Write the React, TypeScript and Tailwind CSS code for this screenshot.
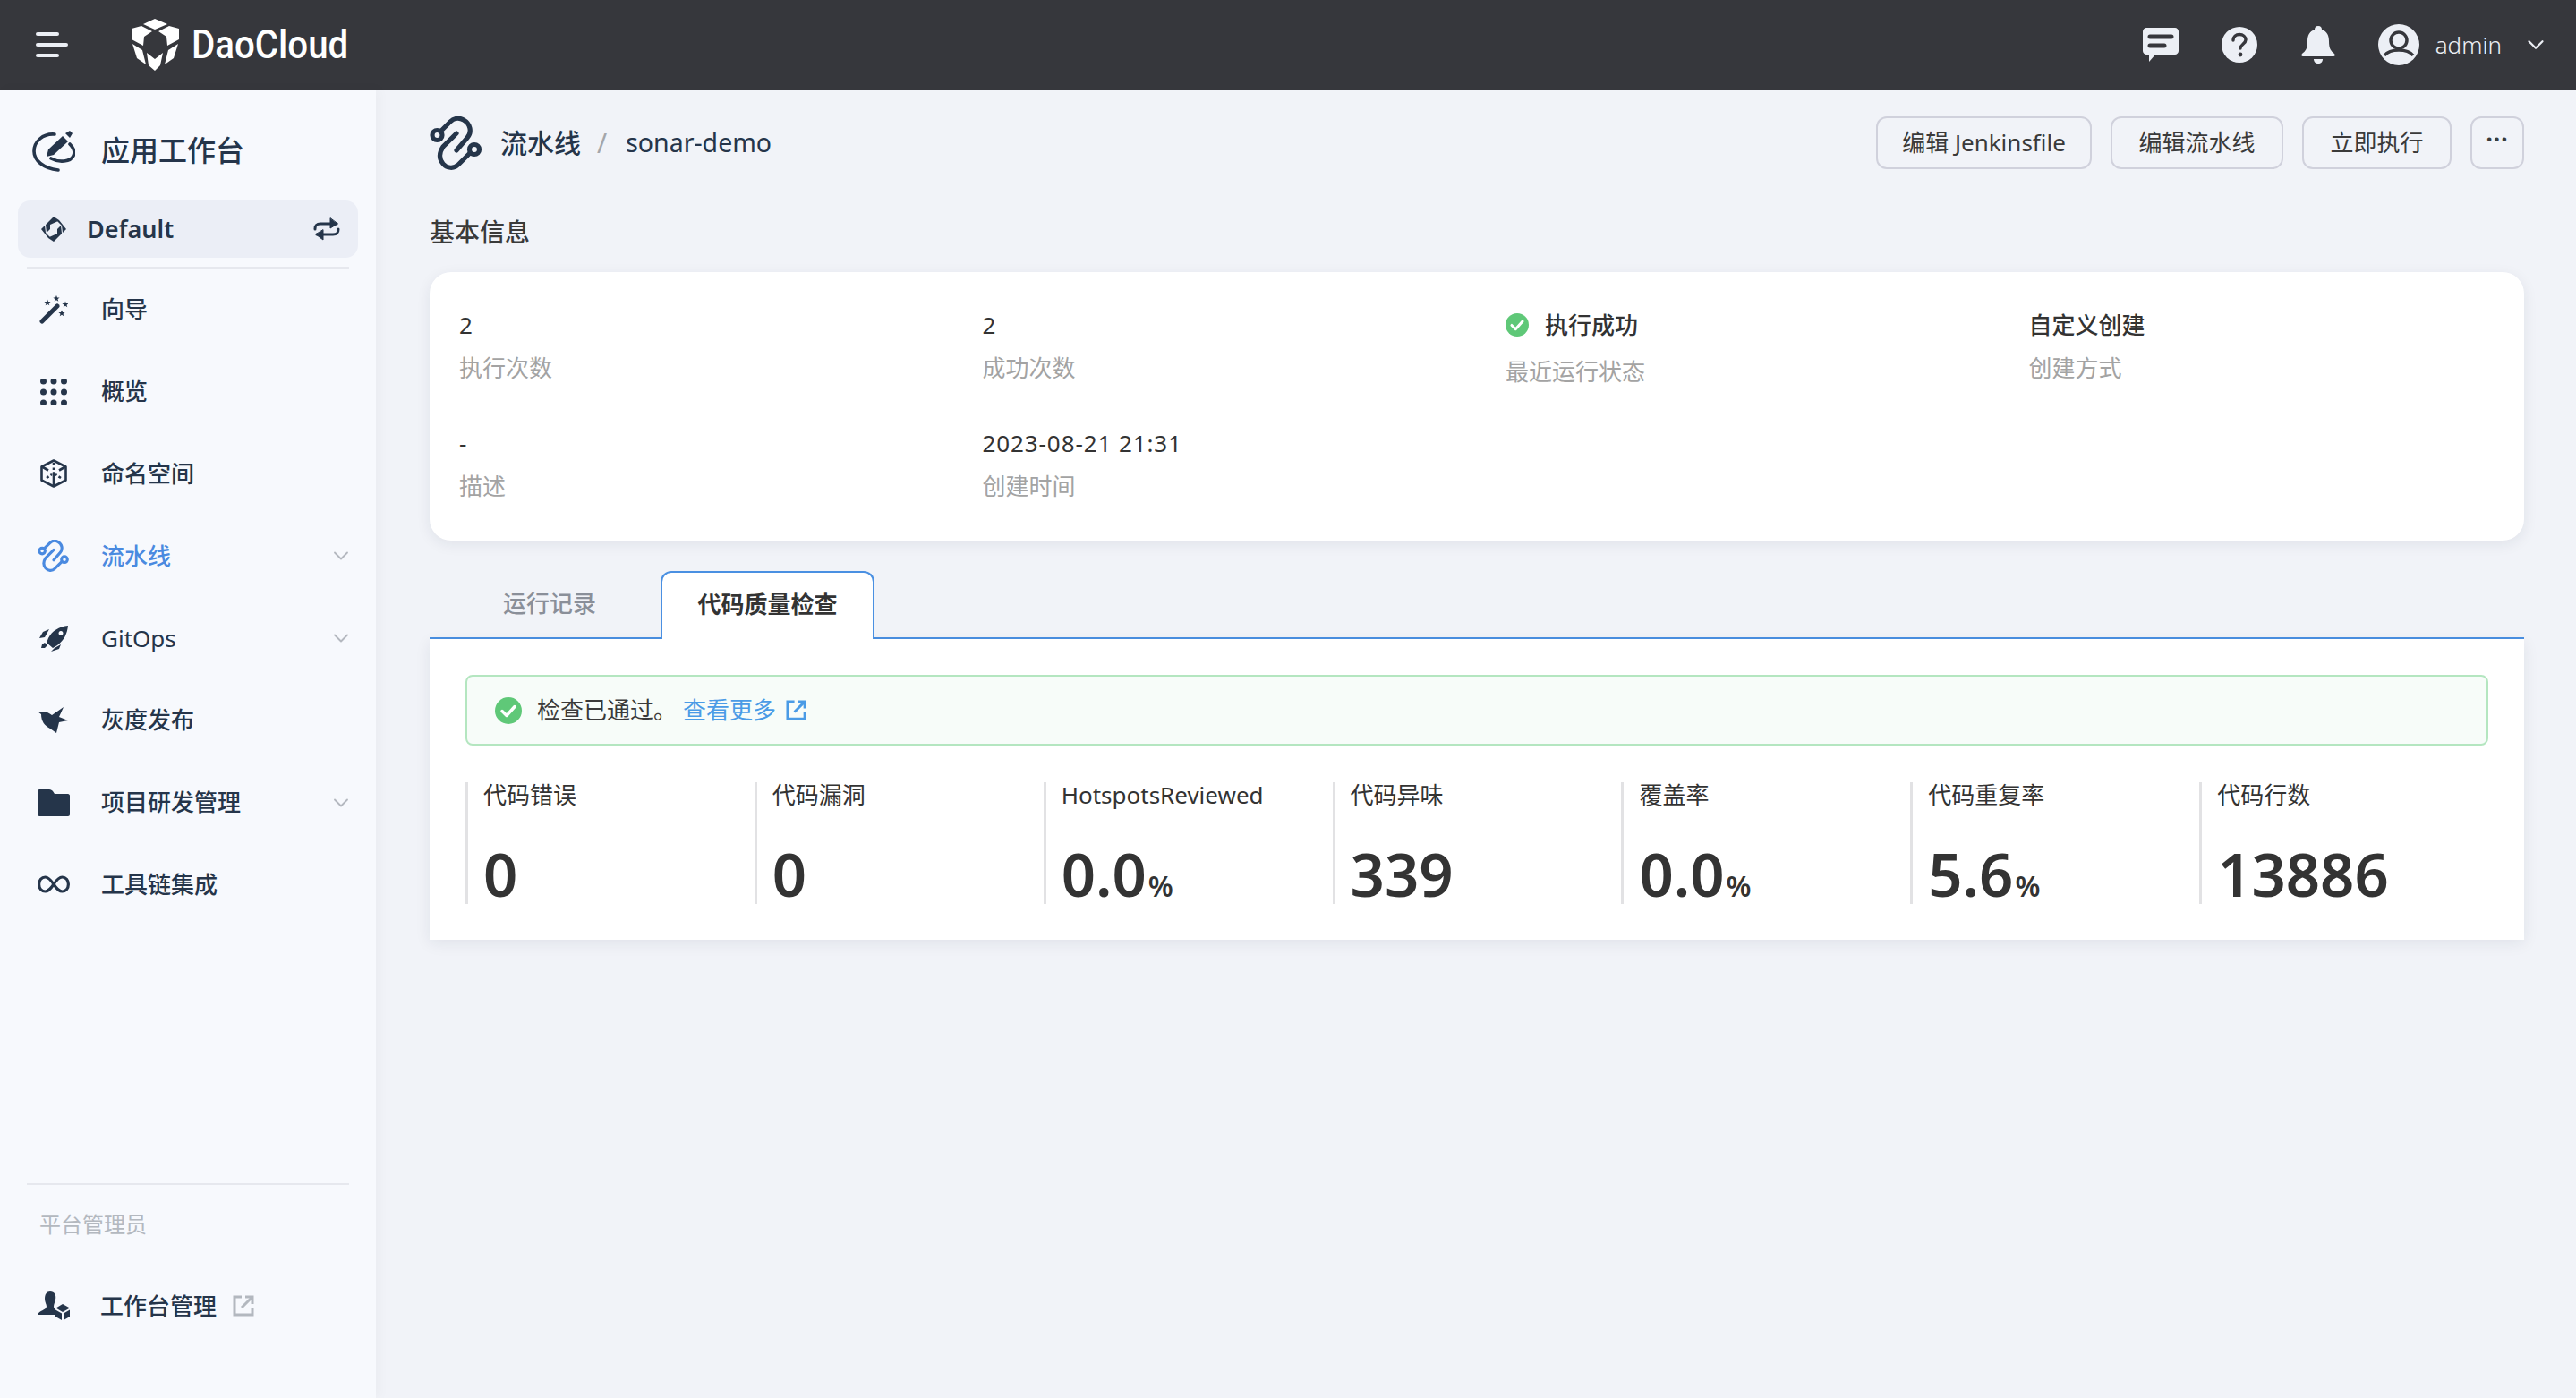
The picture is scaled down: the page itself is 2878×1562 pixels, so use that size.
import { ReactNode } from 'react';
import { ChevronDown } from 'lucide-react';

function LogoIcon() {
  return (
    <svg className="w-[55px] h-[59px]" viewBox="6 5 55 59" fill="#fff">
      <path d="M20 11 L33 5 L47 11 L33 17 Z" />
      <path d="M7 16 L18 13 L30 19 L21 25 L20 35 L7 28 Z" />
      <path d="M60 16 L49 13 L37 19 L46 25 L47 35 L60 28 Z" />
      <path d="M8 33 L19 40 L23 56 L13 49 Z" />
      <path d="M59 33 L48 40 L44 56 L54 49 Z" />
      <path d="M24 43 L33 50 L42 43 L39 57 L33 63 L26 57 Z" />
    </svg>
  );
}

function PipelineIcon({ className, color }: { className: string; color: string }) {
  return (
    <svg className={className} viewBox="5 3 60 60" fill="none" stroke={color} strokeWidth="5.200" strokeLinecap="round">
      <circle cx="13.500" cy="24" r="5.500" />
      <circle cx="55" cy="40" r="5.500" />
      <path d="M17 20 L28 9 C32 5 38 4 43 7 C50 11 53 20 47 27 L35 41" />
      <path d="M50 44 L37 57 C32 62 24 61 20 56 C15 50 16 43 20 37 L35 22" />
    </svg>
  );
}

function AppIcon() {
  return (
    <svg className="w-[48px] h-[48px]" viewBox="6 5 48 48" fill="none" stroke="#25354a" strokeWidth="3.600" strokeLinecap="round">
      <path d="M31 11 C18 10 8 19 8 30 C8 40 18 49 35 51" />
      <path d="M48 22 C52 26 54 31 52 35 C49 42 36 43 27 38" />
      <path d="M22 36 L24 28 L40 13 L46 19 L30 34 Z" fill="#25354a" stroke="none" />
      <path d="M43 10 L48 7 L51 10 L48 15 Z" fill="#25354a" stroke="none" />
    </svg>
  );
}

function WorkspaceIcon() {
  return (
    <svg className="w-[28px] h-[28px]" viewBox="0 0 28 28" fill="#25354a">
      <path d="M14 0 L19 5 L10 9 L10 14 L6 18 L5 9 Z" />
      <path d="M0 14 L4 10 L5 18 L11 24 L14 28 L8 24 Z" />
      <path d="M14 28 L9 23 L18 19 L18 14 L22 10 L23 19 Z" />
      <path d="M28 14 L24 18 L23 10 L17 4 L14 0 L20 4 Z" />
    </svg>
  );
}

function SwitchIcon() {
  return (
    <svg className="w-[30px] h-[26px]" viewBox="0 0 30 26" fill="none" stroke="#25354a" strokeWidth="3" strokeLinecap="round" strokeLinejoin="round">
      <path d="M2 13 C2 8 4 7 8 7 L26 7" />
      <path d="M19 1 L19 12 L27 7 Z" fill="#25354a" strokeWidth="1" />
      <path d="M28 13 C28 18 26 19 22 19 L4 19" />
      <path d="M11 14 L11 25 L3 19 Z" fill="#25354a" strokeWidth="1" />
    </svg>
  );
}

function WandIcon() {
  const star = 'M0 -3.600 L1 -1 L3.600 -1 L1.500 .7 L2.300 3.200 L0 1.700 L-2.300 3.200 L-1.500 .7 L-3.600 -1 L-1 -1 Z';
  return (
    <svg className="w-[32px] h-[32px]" viewBox="0 0 32 32" fill="#25354a">
      <path d="M3 29 L20 12" stroke="#25354a" strokeWidth="5" strokeLinecap="round" />
      <path transform="translate(9 8)" d={star} />
      <path transform="translate(19 3.500)" d={star} />
      <path transform="translate(29 10)" d={star} />
      <path transform="translate(25 20)" d={star} />
    </svg>
  );
}

function GridIcon() {
  return (
    <svg className="w-[30px] h-[30px]" viewBox="0 0 30 30" fill="#25354a">
      {[3, 15, 27].map((y) =>
        [3.500, 15, 26.500].map((x) => <circle key={`${x}-${y}`} cx={x} cy={y} r="3.500" />),
      )}
    </svg>
  );
}

function CubeIcon() {
  return (
    <svg className="w-[32px] h-[32px]" viewBox="0 0 32 32" fill="none" stroke="#25354a" strokeWidth="2.600" strokeLinejoin="round">
      <path d="M16 1.500 L29.500 8.500 L29.500 23.500 L16 30.500 L2.500 23.500 L2.500 8.500 Z" />
      <path d="M3 8.500 L10 12.500 M29 8.500 L22 12.500" />
      <path d="M16 16 L16 30" />
      <path d="M16 4 L16 12 M8 21 L14 17 M24 21 L18 17" strokeDasharray="3 2.400" />
      <circle cx="16" cy="15.500" r="1.600" fill="#25354a" stroke="none" />
    </svg>
  );
}

function RocketIcon() {
  return (
    <svg className="w-[32px] h-[29px]" viewBox="0 0 32 29" fill="#25354a">
      <path fillRule="evenodd" d="M32 0 C22 1 14 6 10 14 L8 19 L15 25 L20 22 C28 16 31 9 32 0 Z M24 6 a2.500 2.500 0 1 0 .01 0 Z" />
      <path d="M11 4 L4 7 L0 14 L6 13 Z" />
      <path d="M24 21 L17 25 L13 29 L22 26 Z" />
      <path d="M6 19 L3 21 L2 25 L6 25 L9 22 Z" />
    </svg>
  );
}

function BirdIcon() {
  return (
    <svg className="w-[36px] h-[30px]" viewBox="0 0 36 30" fill="#25354a">
      <path d="M0 5 L7 5 C10 5 13 7 16 9 L29 0 L24 11 L34 15 L24 17 L21 29 L14 24 C8 21 4 16 4 8 Z" />
    </svg>
  );
}

function FolderIcon() {
  return (
    <svg className="w-[36px] h-[30px]" viewBox="0 0 36 30" fill="#25354a">
      <path d="M2 0 L13 0 C15 0 16 1 17 2 L19 5 L34 5 C35 5 36 6 36 7 L36 28 C36 29 35 30 34 30 L2 30 C1 30 0 29 0 28 L0 2 C0 1 1 0 2 0 Z" />
    </svg>
  );
}

function LoopIcon() {
  return (
    <svg className="w-[36px] h-[20px]" viewBox="0 0 36 20" fill="none" stroke="#25354a" strokeWidth="3.200">
      <path d="M18 10 C14 4 11 2 8.500 2 C4.500 2 1.600 5.500 1.600 10 C1.600 14.500 4.500 18 8.500 18 C11 18 14 16 18 10 C22 4 25 2 27.500 2 C31.500 2 34.400 5.500 34.400 10 C34.400 14.500 31.500 18 27.500 18 C25 18 22 16 18 10 Z" />
    </svg>
  );
}

function AdminIcon() {
  return (
    <svg className="w-[36px] h-[32px]" viewBox="0 0 36 32" fill="#25354a">
      <path d="M14 0 C19 0 21 4 20 9 C19.500 12 18 14 18 17 C18 18 19 19 20 20 L19 26 L0 26 C2 21 9 21 10 17 C10 14 8 12 8 8 C8 3 10 0 14 0 Z" />
      <path d="M28 14 L36 18.500 L28 23 L20.500 18.500 Z" />
      <path d="M20 20.500 L27 24.500 L27 32 L20 28 Z" />
      <path d="M36 20.500 L29 24.500 L29 32 L36 28 Z" />
    </svg>
  );
}

function ExternalIcon({ color, className }: { color: string; className: string }) {
  return (
    <svg className={className} viewBox="0 0 24 24" fill="none" stroke={color} strokeWidth="3">
      <path d="M10 2 L2 2 L2 22 L22 22 L22 14" />
      <path d="M14 2 L22 2 L22 10" />
      <path d="M21 3 L10 14" />
    </svg>
  );
}

function CheckCircle({ className }: { className: string }) {
  return (
    <svg className={className} viewBox="0 0 30 30">
      <circle cx="15" cy="15" r="15" fill="#5fc878" />
      <path d="M8 15.500 L13 20.500 L22 10.500" fill="none" stroke="#fff" strokeWidth="3.400" strokeLinecap="round" strokeLinejoin="round" />
    </svg>
  );
}

const navItems: { label: string; icon: ReactNode; active?: boolean; arrow?: boolean }[] = [
  { label: '向导', icon: <WandIcon /> },
  { label: '概览', icon: <GridIcon /> },
  { label: '命名空间', icon: <CubeIcon /> },
  { label: '流水线', icon: <PipelineIcon className="w-[36px] h-[36px]" color="#4a8ae0" />, active: true, arrow: true },
  { label: 'GitOps', icon: <RocketIcon />, arrow: true },
  { label: '灰度发布', icon: <BirdIcon /> },
  { label: '项目研发管理', icon: <FolderIcon />, arrow: true },
  { label: '工具链集成', icon: <LoopIcon /> },
];

const info = [
  { value: '2', label: '执行次数' },
  { value: '2', label: '成功次数' },
  { value: '执行成功', label: '最近运行状态', status: true },
  { value: '自定义创建', label: '创建方式', strong: true },
  { value: '-', label: '描述' },
  { value: '2023-08-21 21:31', label: '创建时间', wide: true },
];

const stats = [
  { label: '代码错误', value: '0' },
  { label: '代码漏洞', value: '0' },
  { label: 'HotspotsReviewed', value: '0.0', unit: '%' },
  { label: '代码异味', value: '339' },
  { label: '覆盖率', value: '0.0', unit: '%' },
  { label: '代码重复率', value: '5.6', unit: '%' },
  { label: '代码行数', value: '13886' },
];

function Button({ children, className }: { children: ReactNode; className: string }) {
  return (
    <button className={`h-[59px] flex items-center justify-center rounded-[12px] border-2 border-[#d0d1dc] text-[26px] text-[#3a3a3a] ${className}`}>
      {children}
    </button>
  );
}

export default function App() {
  return (
    <div className="min-h-screen flex flex-col bg-[#f1f3f8] font-['Noto_Sans','Noto_Sans_CJK_SC',sans-serif]">
      <header className="h-[100px] shrink-0 bg-[#36373c] flex items-center pl-[40px] pr-[30px]">
        <div className="w-[36px] flex flex-col gap-[8px]">
          <div className="h-[4px] w-[26px] rounded-full bg-[#eceff5]" />
          <div className="h-[4px] w-[36px] rounded-full bg-[#eceff5]" />
          <div className="h-[4px] w-[26px] rounded-full bg-[#eceff5]" />
        </div>
        <div className="ml-[70px]">
          <LogoIcon />
        </div>
        <span className="ml-[13px] inline-block origin-left scale-x-[0.915] text-[44px] leading-none font-medium text-white font-['Roboto',sans-serif]">DaoCloud</span>
        <div className="ml-auto flex items-center">
          <svg className="w-[40px] h-[38px]" viewBox="0 0 40 38">
            <path d="M4 0 L36 0 C38 0 40 2 40 4 L40 26 C40 28 38 30 36 30 L14 30 L7 38 L7 30 L4 30 C2 30 0 28 0 26 L0 4 C0 2 2 0 4 0 Z" fill="#eceff5" />
            <path d="M8 10 L32 10 M8 20 L24 20" stroke="#36373c" strokeWidth="5" strokeLinecap="round" />
          </svg>
          <svg className="ml-[48px] w-[40px] h-[40px]" viewBox="0 0 40 40">
            <circle cx="20" cy="20" r="20" fill="#eceff5" />
            <path d="M13 15 C13 11 16 8.500 20 8.500 C24 8.500 27 11 27 14.500 C27 19 21 19.500 21 24" fill="none" stroke="#36373c" strokeWidth="3.400" strokeLinecap="round" />
            <circle cx="21" cy="31" r="2.400" fill="#36373c" />
          </svg>
          <svg className="ml-[49px] w-[38px] h-[42px]" viewBox="0 0 38 42" fill="#eceff5">
            <path d="M19 0 C22 0 23 2 23 4 C29 6 31 11 31 17 C31 25 33 28 37 31 C38 32 38 34 36 34 L2 34 C0 34 0 32 1 31 C5 28 7 25 7 17 C7 11 9 6 15 4 C15 2 16 0 19 0 Z" />
            <path d="M14 37 L24 37 C24 40 22 42 19 42 C16 42 14 40 14 37 Z" />
          </svg>
          <svg className="ml-[48px] w-[46px] h-[46px]" viewBox="0 0 46 46">
            <circle cx="23" cy="23" r="23" fill="#eceff5" />
            <circle cx="23" cy="18" r="9" fill="none" stroke="#36373c" strokeWidth="3.500" />
            <path d="M7 35 C11 30 17 29 23 29 C29 29 35 30 39 35" fill="none" stroke="#36373c" strokeWidth="3.500" />
          </svg>
          <span className="ml-[18px] text-[26px] text-[#eceff5] font-light leading-none">admin</span>
          <ChevronDown className="ml-[23px] w-[30px] h-[30px] text-[#eceff5]" strokeWidth={1.8} />
        </div>
      </header>

      <div className="flex flex-1">
        <aside className="w-[420px] shrink-0 bg-[#f7f9fd] flex flex-col shadow-[4px_0_12px_rgba(0,0,0,0.03)]">
          <div className="h-[124px] pt-[12px] pl-[36px] flex items-center">
            <AppIcon />
            <span className="ml-[29px] text-[32px] font-medium text-[#25354a]">应用工作台</span>
          </div>
          <div className="mx-[20px] h-[64px] rounded-[14px] bg-[#ebeef6] flex items-center pl-[26px] pr-[20px]">
            <WorkspaceIcon />
            <span className="ml-[23px] text-[27px] font-semibold text-[#25354a]">Default</span>
            <span className="ml-auto">
              <SwitchIcon />
            </span>
          </div>
          <div className="mt-[10px] mx-[30px] h-[2px] bg-[#e6e8ee]" />
          <nav>
            {navItems.map((item) => (
              <div key={item.label} className="h-[91.8px] flex items-center">
                <div className="w-[120px] pl-[42px] pr-[42px] flex justify-center shrink-0 box-border">
                  <div className="w-[36px] flex justify-center shrink-0">{item.icon}</div>
                </div>
                <span className={`-ml-[7px] text-[26px] ${item.label === 'GitOps' ? 'font-normal' : 'font-medium'} ${item.active ? 'text-[#4a8ae0]' : 'text-[#25354a]'}`}>{item.label}</span>
                {item.arrow && <ChevronDown className="ml-auto mr-[25px] w-[28px] h-[28px] text-[#b4b8bf]" strokeWidth={1.6} />}
              </div>
            ))}
          </nav>
          <div className="mt-auto pb-[56px]">
            <div className="mx-[30px] h-[2px] bg-[#e6e8ee]" />
            <div className="h-[88px] pl-[44px] flex items-center text-[24px] text-[#b3b8bf]">平台管理员</div>
            <div className="h-[94px] flex items-center pl-[42px]">
              <AdminIcon />
              <span className="ml-[34px] text-[26px] font-medium text-[#25354a]">工作台管理</span>
              <ExternalIcon color="#b3b8bf" className="ml-[18px] w-[24px] h-[24px]" />
            </div>
          </div>
        </aside>

        <main className="flex-1 pl-[60px] pr-[58px]">
          <div className="mt-[30px] h-[59px] flex items-center">
            <PipelineIcon className="w-[60px] h-[60px]" color="#25354a" />
            <span className="ml-[19px] text-[30px] font-medium text-[#25354a]">流水线</span>
            <span className="ml-[18px] text-[30px] text-[#a4a6aa]">/</span>
            <span className="ml-[21px] text-[28.500px] text-[#25354a]">sonar-demo</span>
            <div className="ml-auto flex gap-[21px]">
              <Button className="w-[241px]">编辑 Jenkinsfile</Button>
              <Button className="w-[193px]">编辑流水线</Button>
              <Button className="w-[167px]">立即执行</Button>
              <Button className="w-[60px] pb-[8px] tracking-[1px] font-bold">···</Button>
            </div>
          </div>

          <h2 className="mt-[48px] mb-[23px] text-[28px] leading-[44px] font-medium text-[#3a3a3a]">基本信息</h2>

          <section className="h-[300px] rounded-[24px] bg-white shadow-[0_4px_16px_rgba(30,40,70,0.08)] pl-[33px] pt-[40px] grid grid-cols-[584.5px_584.5px_584.5px_1fr] auto-rows-[86px] gap-y-[46px]">
            {info.map((item) => (
              <div key={item.label} className="text-[26px] leading-[38px]">
                <div className={`flex items-center ${item.status || item.strong ? 'font-medium' : ''} ${item.wide ? 'tracking-[0.9px]' : ''} text-[#333]`}>
                  {item.status && <CheckCircle className="w-[26px] h-[26px] mr-[18px]" />}
                  {item.value}
                </div>
                <div className={`${item.status ? 'mt-[14px]' : 'mt-[10px]'} text-[#a3a3a3]`}>{item.label}</div>
              </div>
            ))}
          </section>

          <div className="mt-[34px] h-[76px] flex border-b-2 border-[#4a90e2]">
            <div className="w-[258px] pl-[82px] pb-[2px] flex items-center text-[26px] font-medium text-[#8a8f99]">运行记录</div>
            <div className="w-[239px] h-[76px] pb-[4px] flex items-center justify-center rounded-t-[12px] border-2 border-b-0 border-[#4a90e2] bg-white text-[26px] font-semibold text-[#333]">
              代码质量检查
            </div>
          </div>

          <section className="bg-white px-[40px] pt-[40px] pb-[40px] shadow-[0_4px_16px_rgba(30,40,70,0.08)]">
            <div className="h-[79px] rounded-[8px] border-2 border-[#b4e6c0] bg-[#f7fcf9] flex items-center pl-[31px] text-[26px] text-[#3a3a3a]">
              <CheckCircle className="w-[30px] h-[30px] mr-[17px]" />
              <span>检查已通过。</span>
              <span className="ml-[7px] text-[#4a9be6]">查看更多</span>
              <ExternalIcon color="#4a9be6" className="ml-[11px] w-[23px] h-[23px]" />
            </div>
            <div className="mt-[41px] grid grid-cols-7">
              {stats.map((s) => (
                <div key={s.label} className="h-[136px] border-l-[3px] border-[#e2e2e4] pl-[17px] flex flex-col justify-between text-[#333]">
                  <div className="text-[26px] leading-[28px]">{s.label}</div>
                  <div className="text-[67px] leading-[68px] font-semibold">
                    {s.value}
                    {s.unit && <span className="text-[32px] leading-none ml-[2px]">{s.unit}</span>}
                  </div>
                </div>
              ))}
            </div>
          </section>
        </main>
      </div>
    </div>
  );
}
